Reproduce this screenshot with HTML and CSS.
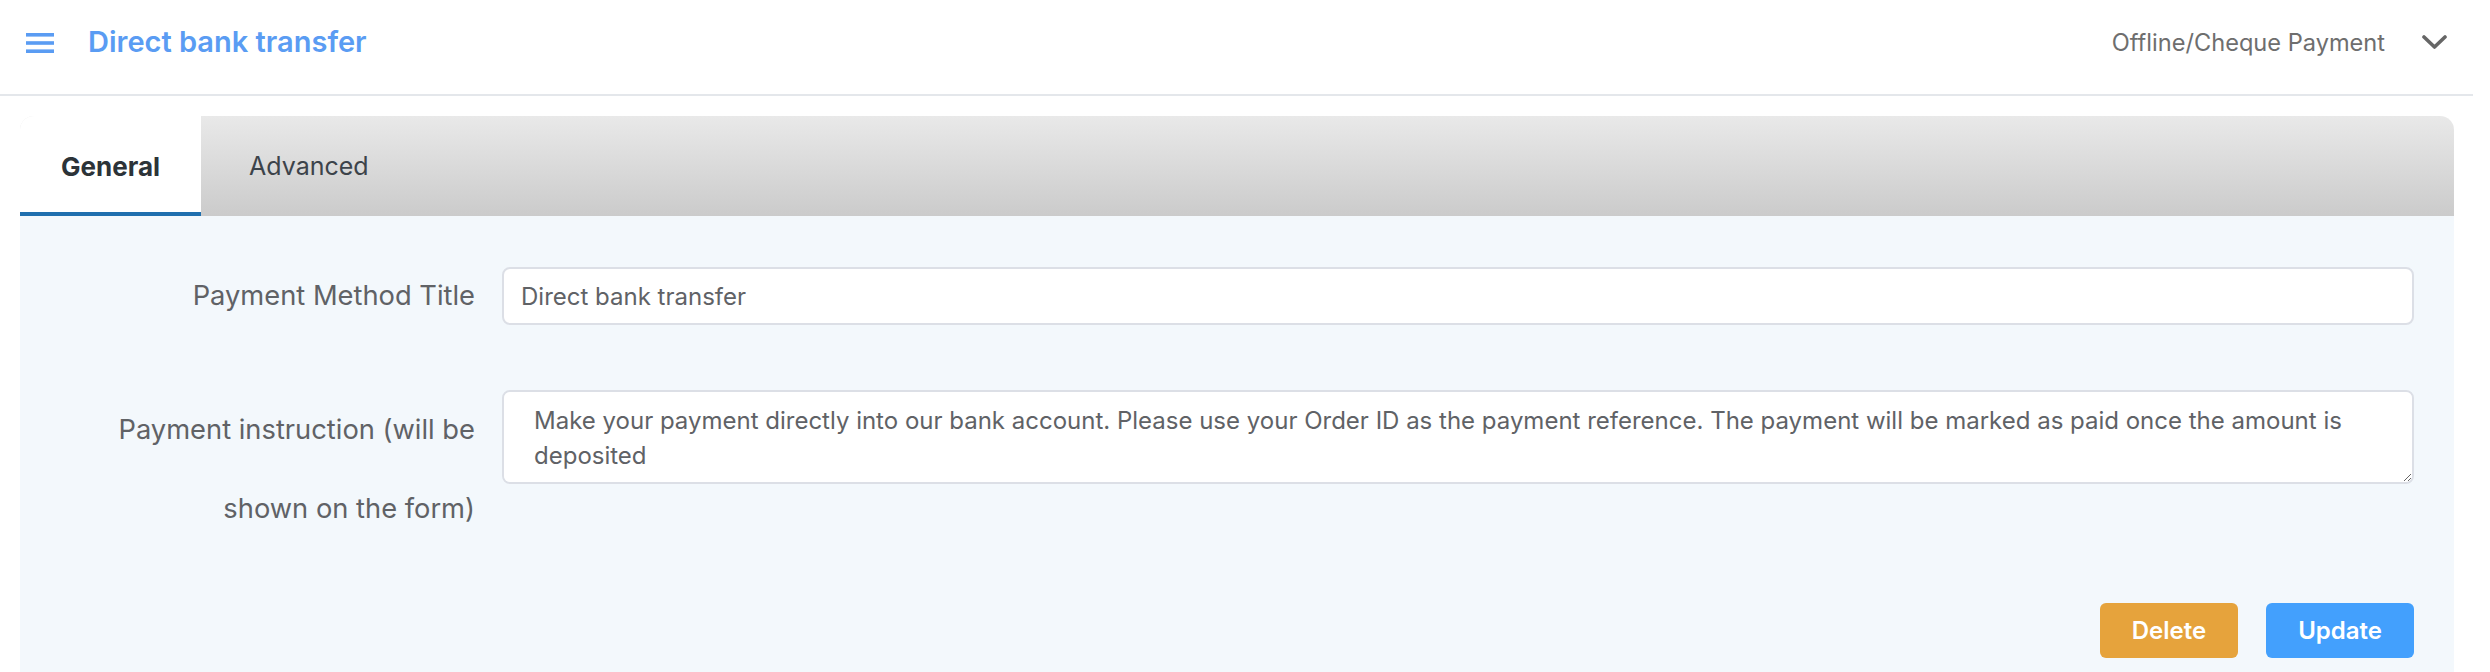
FILE: index.html
```html
<!DOCTYPE html>
<html lang="en">
<head>
  <meta charset="UTF-8">
  <meta name="viewport" content="width=device-width, initial-scale=1.0">
  <title>Direct bank transfer</title>
  <link rel="stylesheet" href="styles.css">
</head>
<body>

  <header class="topbar">
    <div class="topbar-left">
      <svg class="menu-icon" width="28" height="20" viewBox="0 0 28 20">
        <rect x="0" y="0" width="28" height="3.6" fill="#5a9cf3"/>
        <rect x="0" y="8.2" width="28" height="3.6" fill="#5a9cf3"/>
        <rect x="0" y="16.4" width="28" height="3.6" fill="#5a9cf3"/>
      </svg>
      <h1 class="page-title">Direct bank transfer</h1>
    </div>
    <div class="topbar-right">
      <span class="gateway-name">Offline/Cheque Payment</span>
      <svg class="chevron" width="25" height="14" viewBox="0 0 25 14">
        <path d="M2 2 L12.5 12 L23 2" fill="none" stroke="#666" stroke-width="3.6" stroke-linecap="round" stroke-linejoin="round"/>
      </svg>
    </div>
  </header>

  <section class="settings-panel">
    <nav class="tab-bar">
      <a class="tab active">General</a>
      <a class="tab">Advanced</a>
    </nav>

    <form class="panel-body">
      <div class="form-row">
        <label class="form-label">Payment Method Title</label>
        <input type="text" class="form-input" value="Direct bank transfer">
      </div>

      <div class="form-row">
        <label class="form-label">Payment instruction (will be shown on the form)</label>
        <textarea class="form-textarea">Make your payment directly into our bank account. Please use your Order ID as the payment reference. The payment will be marked as paid once the amount is deposited</textarea>
      </div>

      <div class="form-actions">
        <button type="button" class="btn btn-warning">Delete</button>
        <button type="button" class="btn btn-primary">Update</button>
      </div>
    </form>
  </section>

</body>
</html>
```

FILE: styles.css
```css
body {
  margin: 0;
  font-family: 'Inter', 'Noto Sans', sans-serif;
  background: #fff;
  color: #606266;
}

.topbar {
  display: flex;
  justify-content: space-between;
  align-items: center;
  height: 84px;
  padding: 0 26px 10px 26px;
  margin-right: 17px;
  border-bottom: 2px solid #e4e7eb;
}

.topbar-left,
.topbar-right {
  display: flex;
  align-items: center;
}

.menu-icon {
  display: block;
  margin-top: 1px;
}

.page-title {
  margin: -2px 0 0 34px;
  font-size: 29px;
  font-weight: 600;
  color: #5a9cf3;
}

.gateway-name {
  font-size: 23.6px;
  color: #6e6e6e;
}

.chevron {
  display: block;
  margin-left: 37px;
}

.settings-panel {
  margin: 20px 36px 0 20px;
}

.tab-bar {
  display: flex;
  height: 100px;
  border-radius: 14px 14px 0 0;
  overflow: hidden;
  background: linear-gradient(#e9e9e9, #cbcbcb);
}

.tab {
  display: flex;
  align-items: center;
  padding: 0 44px 0 48px;
  font-size: 25px;
  color: #3c434a;
  cursor: pointer;
}

.tab.active {
  padding: 4px 41px 0 41px;
  background: #fff;
  font-size: 26px;
  font-weight: 700;
  color: #2c3338;
  border-bottom: 4px solid #1f6fae;
}

.panel-body {
  background: #f3f8fc;
  padding: 40px 40px 40px 0;
  min-height: 420px;
}

.form-row {
  display: flex;
  align-items: flex-start;
  gap: 27px;
  margin-bottom: 55px;
}

.form-label {
  flex: 0 0 400px;
  padding-left: 55px;
  text-align: right;
  font-size: 27.3px;
  line-height: 79px;
  color: #606266;
}

.form-input,
.form-textarea {
  flex: 1;
  box-sizing: border-box;
  font-family: inherit;
  font-size: 24px;
  color: #606266;
  background: #fff;
  border: 2px solid #dcdfe6;
  border-radius: 8px;
  outline: none;
}

.form-input {
  height: 58px;
  margin-top: 11px;
  padding: 0 17px;
}

.form-textarea {
  height: 94px;
  padding: 11px 30px;
  line-height: 35px;
  resize: vertical;
}

.form-actions {
  display: flex;
  justify-content: flex-end;
  gap: 28px;
}

.btn {
  height: 55px;
  padding: 0 32px;
  border: none;
  border-radius: 6px;
  font-family: inherit;
  font-size: 24px;
  font-weight: 600;
  color: #fff;
  cursor: pointer;
}

.btn-warning {
  background: #e6a33c;
}

.btn-primary {
  background: #43a0fd;
}
```
